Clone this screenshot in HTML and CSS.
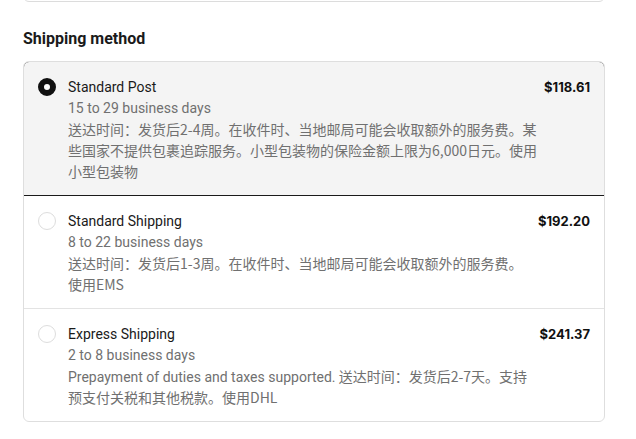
FILE: index.html
```html
<!DOCTYPE html>
<html lang="zh">
<head>
<meta charset="utf-8">
<link rel="stylesheet" href="styles.css">
</head>
<body>
<div class="page">
  <div class="prev-card"></div>
  <h2 class="heading">Shipping method</h2>
  <div class="methods">
    <label class="method selected">
      <span class="radio checked"></span>
      <div class="info">
        <div class="title">Standard Post</div>
        <div class="days">15 to 29 business days</div>
        <div class="desc">送达时间：发货后2-4周。在收件时、当地邮局可能会收取额外的服务费。某些国家不提供包裹追踪服务。小型包装物的保险金额上限为6,000日元。使用小型包装物</div>
      </div>
      <div class="price">$118.61</div>
    </label>
    <label class="method">
      <span class="radio"></span>
      <div class="info">
        <div class="title">Standard Shipping</div>
        <div class="days">8 to 22 business days</div>
        <div class="desc">送达时间：发货后1-3周。在收件时、当地邮局可能会收取额外的服务费。使用EMS</div>
      </div>
      <div class="price">$192.20</div>
    </label>
    <label class="method">
      <span class="radio"></span>
      <div class="info">
        <div class="title">Express Shipping</div>
        <div class="days">2 to 8 business days</div>
        <div class="desc"><span class="latin">Prepayment of duties and taxes supported.</span> 送达时间：发货后2-7天。支持预支付关税和其他税款。使用DHL</div>
      </div>
      <div class="price">$241.37</div>
    </label>
  </div>
</div>
</body>
</html>
```
FILE: styles.css
```css
* { box-sizing: border-box; }
body {
  margin: 0;
  background: #fff;
  font-family: Roboto, "Noto Sans CJK SC", sans-serif;
  color: #1a1a1a;
}
.page {
  padding: 0 31px 0 23px;
}
.prev-card {
  height: 20px;
  margin-top: -18px;
  border: 1px solid #dcdcdc;
  border-radius: 6px;
}
.heading {
  margin: 26px 0 12px;
  font-size: 16px;
  line-height: 21px;
  font-weight: 700;
  color: #1a1a1a;
}
.methods {
  border: 1px solid #dedede;
  border-radius: 6px;
  overflow: hidden;
}
.method {
  display: flex;
  align-items: flex-start;
  padding: 15px 14px 13px 14px;
  border-top: 1px solid #e3e3e3;
  font-size: 14px;
  line-height: 21px;
}
.method:first-child,
.method.selected + .method { border-top: none; }
.method.selected {
  background: #f4f4f4;
  border: 1px solid #1a1a1a;
  border-radius: 6px 6px 0 0;
  margin: -1px -1px 0;
}
.radio {
  flex: none;
  width: 18px;
  height: 18px;
  margin-top: 1px;
  margin-right: 12px;
  border-radius: 50%;
  border: 1.5px solid #dddddd;
  background: #fff;
}
.radio.checked {
  border: 6px solid #111;
  background: #fff;
}
.info {
  flex: 1;
  min-width: 0;
}
.title { color: #1a1a1a; }
.days { color: #707070; }
.desc {
  color: #707070;
  font-family: "Noto Sans CJK SC", sans-serif;
}
.latin {
  font-family: Roboto, sans-serif;
  line-height: 16px;
}
.price {
  flex: none;
  margin-left: 6px;
  font-family: Inter, sans-serif;
  font-size: 13px;
  font-weight: 700;
  color: #111;
}
```
